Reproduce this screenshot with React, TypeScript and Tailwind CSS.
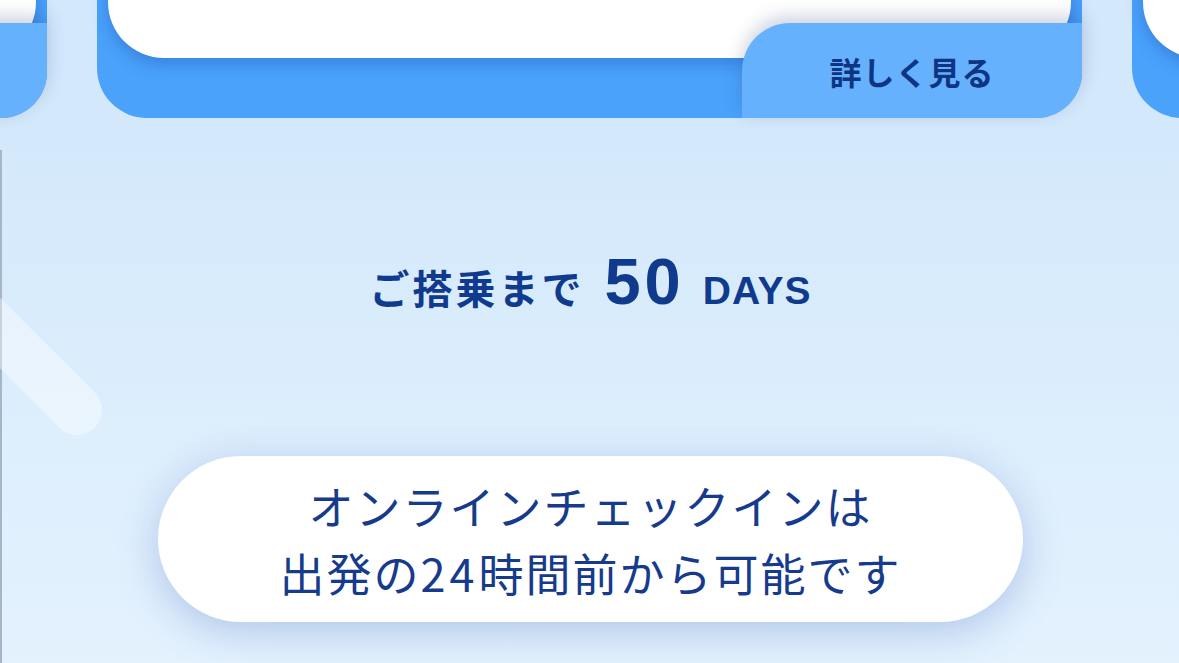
import React from "react";

const jp = { fontFamily: '"Noto Sans CJK JP", "Noto Sans", sans-serif' };
const latin = { fontFamily: '"Liberation Sans", Arial, sans-serif' };

function Card({ label }: { label?: boolean }) {
  return (
    <div className="w-[985px] h-[300px] shrink-0 bg-[#4aa2fb] rounded-bl-[50px] rounded-br-[46px] flex flex-col px-[11px]">
      <div className="flex-1 bg-white rounded-bl-[56px] rounded-br-[56px] shadow-[0_6px_16px_rgba(20,70,170,0.35)]" />
      <div className="relative -mt-[35px] -mr-[11px] flex justify-end">
        <div className="h-[95px] w-[340px] bg-[#65b1fd] rounded-tl-[48px] rounded-br-[46px] flex items-center justify-center shadow-[0_-6px_18px_rgba(40,60,120,0.24)]">
          {label && (
            <span style={jp} className="text-[32px] font-bold text-[#0e3583] tracking-[1px] leading-none">
              詳しく見る
            </span>
          )}
        </div>
      </div>
    </div>
  );
}

export default function App() {
  return (
    <div className="relative w-[1179px] h-[663px] overflow-hidden bg-[#d3e8fb]">
      <div className="flex gap-[50px] ml-[-938px] mt-[-182px]">
        <Card />
        <Card label />
        <Card />
      </div>
      <div className="pt-[32px] h-[545px]">
        <div className="relative h-full border-l-2 border-[#a6b6c8] bg-gradient-to-b from-[#d4e9fb] to-[#e4f2fe] flex flex-col items-center">
          <div className="absolute left-[-200px] top-[235px] w-[300px] h-[50px] rounded-full bg-white/40 origin-[275px_25px] rotate-45" />
          <div className="relative mt-[99px] flex items-baseline text-[#103a8e]">
            <span style={jp} className="text-[40px] font-bold leading-none tracking-[3px]">
              ご搭乗まで
            </span>
            <span style={latin} className="ml-[20px] text-[65px] font-bold leading-none tracking-[4px]">
              50
            </span>
            <span style={latin} className="ml-[18px] text-[39px] font-bold leading-none tracking-[1px]">
              DAYS
            </span>
          </div>
          <div className="relative mt-[142px] w-[865px] h-[166px] rounded-full bg-white shadow-[0_10px_40px_rgba(70,110,190,0.32)] flex flex-col items-center justify-center">
            <p style={jp} className="text-[45px] leading-[67px] text-[#173b8c] text-center tracking-[2px]">
              オンラインチェックインは
              <br />
              出発の<span className="tracking-[4px]">24</span>時間前から可能です
            </p>
          </div>
        </div>
      </div>
    </div>
  );
}
